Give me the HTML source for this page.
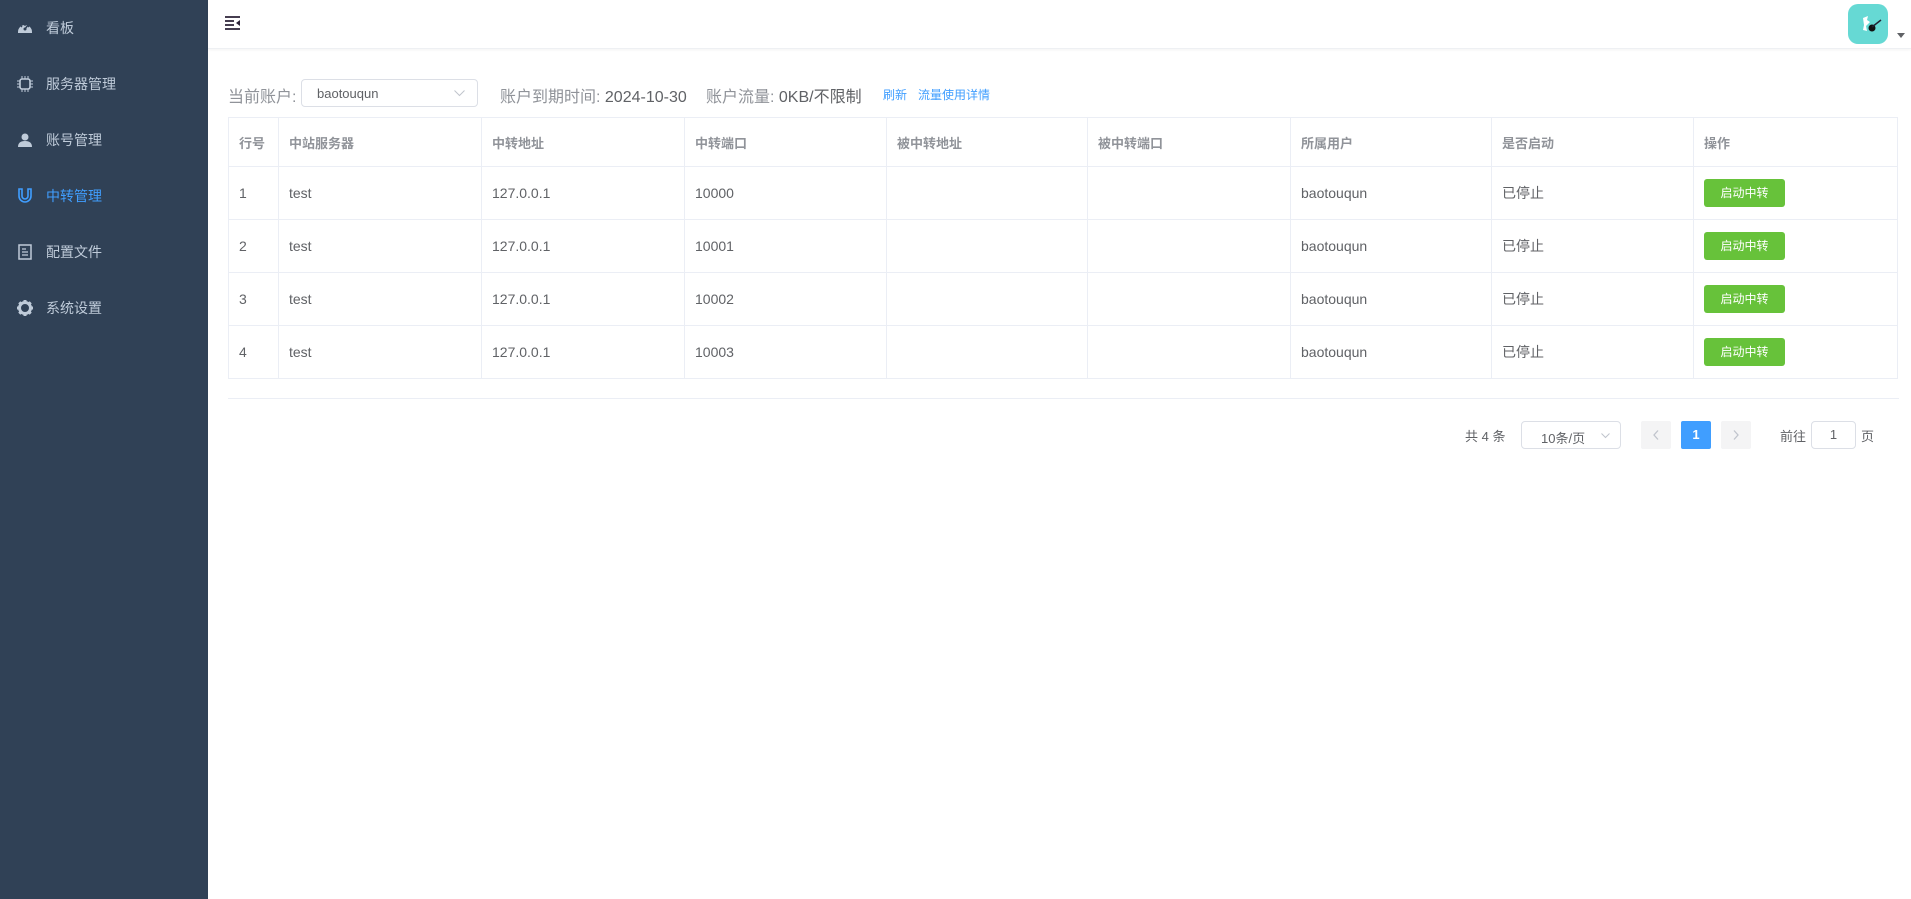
<!DOCTYPE html>
<html><head><meta charset="utf-8"><style>
*{margin:0;padding:0;box-sizing:border-box}
body{width:1911px;height:899px;overflow:hidden;background:#fff;font-family:"Liberation Sans","Noto Sans CJK SC",sans-serif;position:relative;color:#606266}
.side{position:absolute;left:0;top:0;width:208px;height:899px;background:#304156}
.mi{position:absolute;left:0;width:208px;height:56px;display:flex;align-items:center;color:#bfcbd9;font-size:14px}
.mi svg{position:absolute;left:17px;top:20px}
.mi span{position:absolute;left:46px}
.mi.act{color:#409eff}
.hdr{position:absolute;left:208px;top:0;right:0;height:49px;border-bottom:1px solid #eef0f3;box-shadow:0 1px 3px rgba(0,21,41,.05)}
.abs{position:absolute}
.t{position:absolute;font-size:14px;white-space:nowrap}
.f{font-size:16px;top:83px}
table{position:absolute;left:228px;top:117px;border-collapse:collapse;table-layout:fixed;width:1669px}
td,th{border:1px solid #ebeef5;text-align:left;padding-left:10px;font-size:14px;color:#606266;font-weight:normal}
th{height:49px;color:#909399;font-weight:bold;font-size:13px}
td{height:53px}
.btn{display:inline-block;width:81px;height:28px;line-height:28px;text-align:center;background:#67c23a;color:#fff;font-size:12px;border-radius:3px;margin-left:0}
.box{position:absolute;border:1px solid #dcdfe6;border-radius:4px;background:#fff}
</style></head><body>
<div class="side">
 <div class="mi" style="top:0"><svg width="16" height="16" viewBox="0 0 16 16"><path d="M1 12 A7 7 0 0 1 15 12 L15 13 L1 13Z" fill="#bfcbd9"/><circle cx="8" cy="9" r="1.5" fill="#304156"/><path d="M8 9 L11 5" stroke="#304156" stroke-width="1.5"/><path d="M4 6l1 1M8 4v2M12 6l-1 1" stroke="#304156" stroke-width="1.3"/></svg><span>看板</span></div>
 <div class="mi" style="top:56px"><svg width="16" height="16" viewBox="0 0 16 16"><rect x="3" y="3" width="10" height="10" rx="2" fill="none" stroke="#bfcbd9" stroke-width="1.6"/><path d="M5 0v3M8 0v3M11 0v3M5 13v3M8 13v3M11 13v3M0 5h3M0 8h3M0 11h3M13 5h3M13 8h3M13 11h3" stroke="#bfcbd9" stroke-width="1"/></svg><span>服务器管理</span></div>
 <div class="mi" style="top:112px"><svg width="16" height="16" viewBox="0 0 16 16"><circle cx="8" cy="5" r="3.5" fill="#bfcbd9"/><path d="M1 15 Q1 9 8 9 Q15 9 15 15Z" fill="#bfcbd9"/></svg><span>账号管理</span></div>
 <div class="mi act" style="top:168px"><svg width="16" height="16" viewBox="0 0 16 16"><path d="M2 1 V8 A6 6 0 0 0 14 8 V1 H11 V8 A3 3 0 0 1 5 8 V1Z" fill="none" stroke="#409eff" stroke-width="1.6"/></svg><span>中转管理</span></div>
 <div class="mi" style="top:224px"><svg width="16" height="16" viewBox="0 0 16 16"><rect x="2" y="1" width="12" height="14" fill="none" stroke="#bfcbd9" stroke-width="1.5"/><path d="M5 5h4M5 8h6M5 11h6" stroke="#bfcbd9" stroke-width="1.3"/></svg><span>配置文件</span></div>
 <div class="mi" style="top:280px"><svg width="16" height="16" viewBox="0 0 16 16"><circle cx="8" cy="8" r="5.5" fill="none" stroke="#bfcbd9" stroke-width="3"/><path d="M8 0v3M8 13v3M0 8h3M13 8h3M2.3 2.3l2 2M11.7 11.7l2 2M2.3 13.7l2-2M11.7 4.3l2-2" stroke="#bfcbd9" stroke-width="3"/></svg><span>系统设置</span></div>
</div>
<div class="hdr"></div>
<svg class="abs" style="left:225px;top:16px" width="16" height="14" viewBox="0 0 16 14"><path d="M0 1h15M0 5h9M0 9h9M0 13h15" stroke="#2c2338" stroke-width="1.8"/><path d="M15 4v6l-4-3z" fill="#2c2338"/></svg>
<div class="abs" style="left:1848px;top:4px;width:40px;height:40px;border-radius:10px;background:#66d9d4"></div>
<svg class="abs" style="left:1848px;top:4px" width="40" height="40" viewBox="0 0 40 40"><path d="M15 14 L20 12 L19 16 L22 18 L18 22 L19 27 L15 26 L16 21 Z" fill="#fff"/><circle cx="24" cy="24" r="3.5" fill="#111"/><path d="M24 23 L33 16" stroke="#223" stroke-width="1.5"/></svg>
<svg class="abs" style="left:1897px;top:33px" width="8" height="5"><path d="M0 0h8L4 5z" fill="#606266"/></svg>

<div class="t f" style="left:228px;color:#909399">当前账户:</div>
<div class="box" style="left:301px;top:79px;width:177px;height:28px"><span class="t" style="left:15px;top:6px;font-size:13px;color:#606266">baotouqun</span><svg class="abs" style="left:152px;top:10px" width="11" height="7"><path d="M0.5 0.5 L5.5 5.5 L10.5 0.5" fill="none" stroke="#c0c4cc"/></svg></div>
<div class="t f" style="left:500px;color:#909399">账户到期时间: <span style="color:#606266">2024-10-30</span></div>
<div class="t f" style="left:706px;color:#909399">账户流量: <span style="color:#606266">0KB/不限制</span></div>
<div class="t" style="left:883px;top:86px;font-size:12px;color:#409eff">刷新</div>
<div class="t" style="left:918px;top:86px;font-size:12px;color:#409eff">流量使用详情</div>

<table>
<colgroup><col style="width:50px"><col style="width:203px"><col style="width:203px"><col style="width:202px"><col style="width:201px"><col style="width:203px"><col style="width:201px"><col style="width:202px"><col style="width:204px"></colgroup>
<tr><th>行号</th><th>中站服务器</th><th>中转地址</th><th>中转端口</th><th>被中转地址</th><th>被中转端口</th><th>所属用户</th><th>是否启动</th><th>操作</th></tr>
<tr><td>1</td><td>test</td><td>127.0.0.1</td><td>10000</td><td></td><td></td><td>baotouqun</td><td>已停止</td><td><span class="btn">启动中转</span></td></tr>
<tr><td>2</td><td>test</td><td>127.0.0.1</td><td>10001</td><td></td><td></td><td>baotouqun</td><td>已停止</td><td><span class="btn">启动中转</span></td></tr>
<tr><td>3</td><td>test</td><td>127.0.0.1</td><td>10002</td><td></td><td></td><td>baotouqun</td><td>已停止</td><td><span class="btn">启动中转</span></td></tr>
<tr><td>4</td><td>test</td><td>127.0.0.1</td><td>10003</td><td></td><td></td><td>baotouqun</td><td>已停止</td><td><span class="btn">启动中转</span></td></tr>
</table>
<div class="abs" style="left:228px;top:398px;width:1671px;height:1px;background:#ebeef5"></div>

<div class="t" style="left:1465px;top:426px;font-size:13px">共 4 条</div>
<div class="box" style="left:1521px;top:421px;width:100px;height:28px"><span class="t" style="left:19px;top:6px;font-size:13px">10条/页</span><svg class="abs" style="left:79px;top:11px" width="9" height="6"><path d="M0.5 0.5 L4.5 4.5 L8.5 0.5" fill="none" stroke="#c0c4cc"/></svg></div>
<div class="abs" style="left:1641px;top:421px;width:30px;height:28px;background:#f4f4f5;border-radius:2px"><svg class="abs" style="left:12px;top:9px" width="6" height="10"><path d="M5 0.5 L1 5 L5 9.5" fill="none" stroke="#c0c4cc" stroke-width="1.3"/></svg></div>
<div class="abs" style="left:1681px;top:421px;width:30px;height:28px;background:#409eff;border-radius:2px;color:#fff;font-size:13px;font-weight:bold;text-align:center;line-height:28px">1</div>
<div class="abs" style="left:1721px;top:421px;width:30px;height:28px;background:#f4f4f5;border-radius:2px"><svg class="abs" style="left:12px;top:9px" width="6" height="10"><path d="M1 0.5 L5 5 L1 9.5" fill="none" stroke="#c0c4cc" stroke-width="1.3"/></svg></div>
<div class="t" style="left:1780px;top:426px;font-size:13px">前往</div>
<div class="box" style="left:1811px;top:421px;width:45px;height:28px;text-align:center;line-height:26px;font-size:13px">1</div>
<div class="t" style="left:1861px;top:426px;font-size:13px">页</div>
</body></html>
